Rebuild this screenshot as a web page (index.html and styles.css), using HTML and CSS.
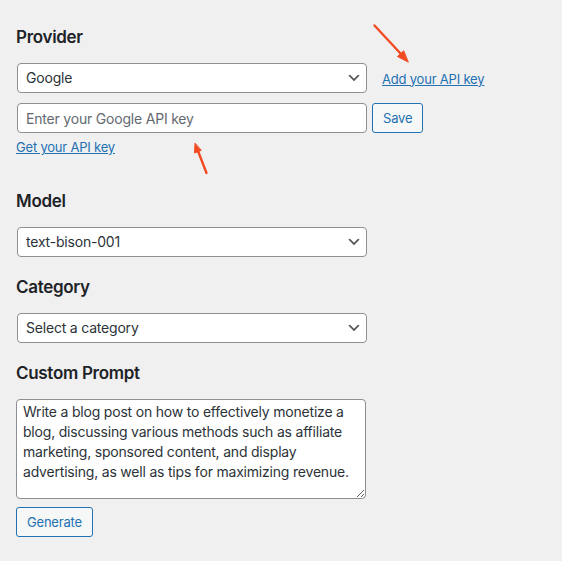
FILE: index.html
```html
<!DOCTYPE html>
<html lang="en">
<head>
<meta charset="utf-8">
<title>AI Content Generator</title>
<link rel="stylesheet" href="styles.css">
</head>
<body>
<div class="wrap">
  <section class="group">
    <h2 class="heading">Provider</h2>
    <div class="row">
      <div class="select-wrap">
        <select class="field">
          <option>Google</option>
        </select>
        <svg class="chevron" viewBox="0 0 20 20" width="16" height="16"><path d="M5 6l5 5 5-5 2 1-7 7-7-7 2-1z" fill="#555"/></svg>
      </div>
      <a href="#" class="link link-side">Add your API key</a>
    </div>
    <div class="row row-key">
      <input class="field" type="text" placeholder="Enter your Google API key">
      <button class="button button-save" type="button">Save</button>
    </div>
    <a href="#" class="link link-below">Get your API key</a>
  </section>

  <section class="group group-model">
    <h2 class="heading">Model</h2>
    <div class="select-wrap">
      <select class="field">
        <option>text-bison-001</option>
      </select>
      <svg class="chevron" viewBox="0 0 20 20" width="16" height="16"><path d="M5 6l5 5 5-5 2 1-7 7-7-7 2-1z" fill="#555"/></svg>
    </div>
  </section>

  <section class="group group-next">
    <h2 class="heading">Category</h2>
    <div class="select-wrap">
      <select class="field">
        <option>Select a category</option>
      </select>
      <svg class="chevron" viewBox="0 0 20 20" width="16" height="16"><path d="M5 6l5 5 5-5 2 1-7 7-7-7 2-1z" fill="#555"/></svg>
    </div>
  </section>

  <section class="group group-next">
    <h2 class="heading">Custom Prompt</h2>
    <textarea class="prompt">Write a blog post on how to effectively monetize a blog, discussing various methods such as affiliate marketing, sponsored content, and display advertising, as well as tips for maximizing revenue.</textarea>
    <button class="button button-generate" type="button">Generate</button>
  </section>

  <svg class="annotations" width="562" height="561" viewBox="0 0 562 561">
    <g fill="#f24b22" stroke="#f24b22" stroke-width="2.4" stroke-linecap="round">
      <line x1="374.5" y1="25.5" x2="401" y2="54"/>
      <polygon points="408,62 397.5,56.5 403.5,51" stroke-width="1"/>
      <line x1="206.5" y1="173" x2="198" y2="151"/>
      <polygon points="195,143.5 194.5,153 201,150.5" stroke-width="1"/>
    </g>
  </svg>
</div>
</body>
</html>
```

FILE: styles.css
```css
html, body {
  margin: 0;
  padding: 0;
  background: #f0f0f1;
}

body {
  font-family: Inter, "Liberation Sans", Arial, sans-serif;
  color: #2c3338;
  font-size: 13px;
  letter-spacing: -0.2px;
}

.wrap {
  position: relative;
  padding: 26px 0 0 16px;
  width: 546px;
  height: 535px;
}

.group {
  display: flex;
  flex-direction: column;
  align-items: flex-start;
}

.group-model {
  margin-top: 33px;
}

.group-next {
  margin-top: 19px;
}

.heading {
  margin: 0 0 15px;
  font-size: 17px;
  line-height: 22px;
  font-weight: 600;
  letter-spacing: -0.3px;
  color: #1d2327;
}

.row {
  display: flex;
  align-items: center;
}

.row-key {
  margin-top: 10px;
}

.select-wrap {
  position: relative;
  display: flex;
}

.field {
  box-sizing: border-box;
  width: 350px;
  height: 30px;
  margin: 0 0 0 1px;
  padding: 0 24px 0 8px;
  border: 1px solid #8c8f94;
  border-radius: 4px;
  background: #fff;
  font-family: inherit;
  font-size: 14px;
  letter-spacing: -0.2px;
  line-height: 28px;
  color: #2c3338;
  -webkit-appearance: none;
  appearance: none;
  outline: none;
}

input.field {
  padding: 0 8px;
}

input.field::placeholder {
  color: #646970;
}

.chevron {
  position: absolute;
  right: 5px;
  top: 7px;
  pointer-events: none;
}

.link {
  color: #2271b1;
  text-decoration: underline;
  font-size: 13px;
  line-height: 20px;
}

.link-side {
  margin-left: 15px;
  margin-top: 1px;
}

.link-below {
  margin-top: 4px;
}

.button {
  box-sizing: border-box;
  height: 30px;
  padding: 0 10px;
  border: 1px solid #2271b1;
  border-radius: 3px;
  background: #f6f7f7;
  color: #2271b1;
  font-family: inherit;
  font-size: 13px;
  letter-spacing: -0.2px;
  line-height: 28px;
  cursor: pointer;
}

.button-save {
  margin-left: 5px;
}

.button-generate {
  margin-top: 8px;
}

.prompt {
  box-sizing: border-box;
  display: block;
  width: 350px;
  height: 100px;
  margin: 0;
  padding: 2px 6px;
  border: 1px solid #8c8f94;
  border-radius: 4px;
  background: #fff;
  font-family: inherit;
  font-size: 14px;
  letter-spacing: -0.2px;
  line-height: 20px;
  color: #2c3338;
  outline: none;
}

.annotations {
  position: absolute;
  left: 0;
  top: 0;
  pointer-events: none;
}
```
